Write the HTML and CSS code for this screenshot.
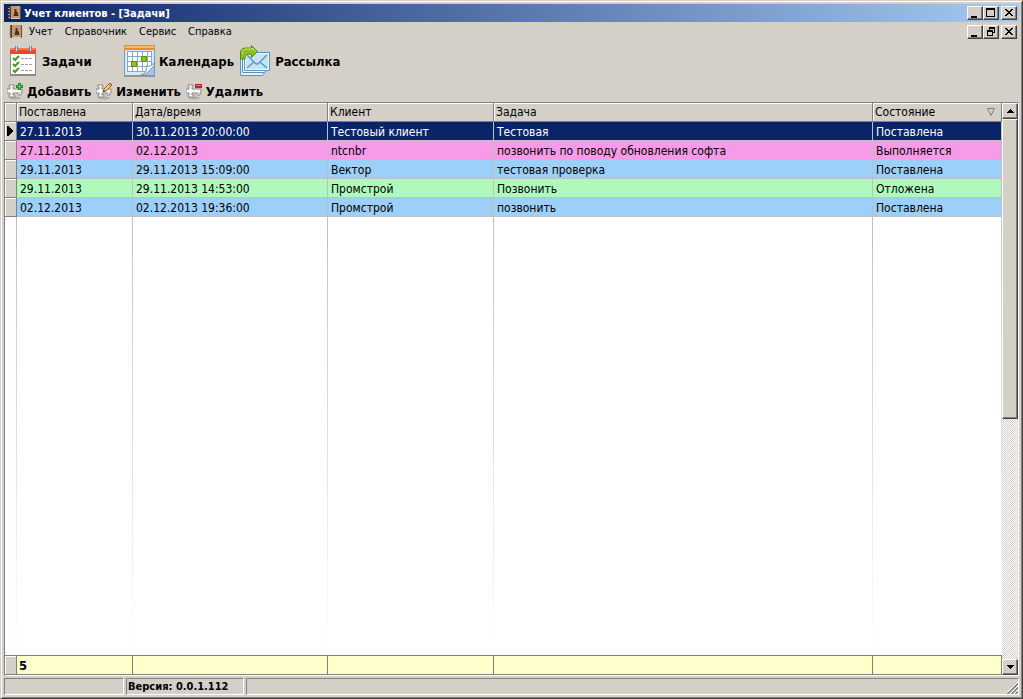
FILE: index.html
```html
<!DOCTYPE html>
<html lang="ru">
<head>
  <meta charset="UTF-8">
  <meta name="viewport" content="width=device-width, initial-scale=1.0">
  <title>Учет клиентов - [Задачи]</title>
  <link rel="stylesheet" href="styles.css">
</head>
<body>

  <svg class="sprite" width="0" height="0" aria-hidden="true">
    <symbol id="book" viewBox="0 0 14 14">
      <rect x="1" y="0" width="12" height="13" rx="1" fill="#6b4a30"/>
      <rect x="3" y="0" width="9" height="12" fill="#c29a72"/>
      <rect x="2" y="0" width="1" height="13" fill="#4a3628"/>
      <path d="M0 2.500h2M0 5.500h2M0 8.500h2M0 11.500h2" stroke="#a49a8c"/>
      <path d="M6.500 3h2v3h1l1 4h-5l1-4h0z" fill="#4b2f1d"/>
      <rect x="3" y="12" width="9" height="1" fill="#dccdb8"/>
    </symbol>
    <symbol id="joint" viewBox="0 0 17 17">
      <ellipse cx="8" cy="15" rx="6" ry="1.500" fill="#8f8c86" opacity=".5"/>
      <path d="M2 2h5v2H6v2h9v4h-1v2h-3v-2H6v2h2v2H2v-2h1v-2H0V6h3V4H2z" fill="#f8f8f6" stroke="#8c8984"/>
      <path d="M1 9.500h2M6 9.500h7" stroke="#c4c2bd"/>
    </symbol>
  </svg>

  <div class="window">
    <header class="titlebar">
      <svg class="app-icon" width="14" height="14"><use href="#book"/></svg>
      <h1>Учет клиентов - [Задачи]</h1>
      <div class="controls">
        <button class="ctl" aria-label="Свернуть"><svg width="12" height="10"><path d="M2 8h6v2H2z"/></svg></button>
        <button class="ctl" aria-label="Развернуть"><svg width="12" height="10"><path d="M1 0h9v9H1zM2 2v6h7V2z" fill-rule="evenodd"/></svg></button>
        <button class="ctl ctl-close" aria-label="Закрыть"><svg width="12" height="10"><path d="M2 1h2v1h1v1h2V2h1V1h2v1H9v1H8v1H7v1h1v1h1v1h1v1H8V7H7V6H5v1H4v1H2V7h1V6h1V5h1V4H4V3H3V2H2z"/></svg></button>
      </div>
    </header>

    <div class="menubar">
      <svg class="app-icon" width="14" height="14"><use href="#book"/></svg>
      <nav class="menu">
        <a href="#">Учет</a>
        <a href="#">Справочник</a>
        <a href="#">Сервис</a>
        <a href="#">Справка</a>
      </nav>
      <div class="controls">
        <button class="ctl" aria-label="Свернуть окно"><svg width="12" height="10"><path d="M2 8h6v2H2z"/></svg></button>
        <button class="ctl" aria-label="Восстановить окно"><svg width="12" height="10"><path d="M4 0h6v6H8V5h1V2H5v1H4zM2 3h6v6H2zM3 5v3h4V5z" fill-rule="evenodd"/></svg></button>
        <button class="ctl ctl-close" aria-label="Закрыть окно"><svg width="12" height="10"><path d="M2 1h2v1h1v1h2V2h1V1h2v1H9v1H8v1H7v1h1v1h1v1h1v1H8V7H7V6H5v1H4v1H2V7h1V6h1V5h1V4H4V3H3V2H2z"/></svg></button>
      </div>
    </div>

    <div class="toolbar toolbar-main">
      <button class="tool tool-tasks">
        <svg width="32" height="32">
          <rect x="1" y="3" width="26" height="28" fill="#8d8a86"/>
          <rect x="2" y="4" width="24" height="25" fill="#fff"/>
          <rect x="1" y="3" width="26" height="6" fill="#e8492a"/>
          <rect x="1" y="3" width="26" height="2" fill="#f47a50"/>
          <path d="M7.500 1v6M21.500 1v6" stroke="#6f8796" stroke-width="3"/>
          <path d="M7.500 1v5M21.500 1v5" stroke="#c6dbe5"/>
          <path d="M4 13l2 2 4-4M4 19l2 2 4-4M4 25l2 2 4-4" fill="none" stroke="#4f971c" stroke-width="2"/>
          <path d="M12 13.500h11M12 19.500h11M12 25.500h11" stroke="#a5a5a5" stroke-dasharray="3 1"/>
        </svg>
        <span>Задачи</span>
      </button>
      <button class="tool">
        <svg width="31" height="32">
          <rect x="0" y="0" width="31" height="31" fill="#709dbe"/>
          <rect x="1" y="1" width="29" height="29" fill="#d3ebfa"/>
          <rect x="0" y="0" width="31" height="5" fill="#ee8b2a"/>
          <rect x="1" y="1" width="29" height="2" fill="#ffb869"/>
          <rect x="3" y="6" width="25" height="20" fill="#fff"/>
          <path d="M3.500 6v21M8.500 6v21M13.500 6v21M18.500 6v21M23.500 6v21M27.500 6v21M3 6.500h25M3 11.500h25M3 16.500h25M3 21.500h25M3 26.500h25" stroke="#8aa8bf"/>
          <path d="M7 16h6v6H7zM17 11h6v6h-6z" fill="#5f9516"/>
          <path d="M8 17h4v4H8zM18 12h4v4h-4z" fill="#8cc21f"/>
          <path d="M30 17v13H16c5-1 6-4 6-8 4 1 7-1 8-5z" fill="#a2c8e6"/>
          <path d="M17 30c5-1 6-5 5-9 4 1 6-1 8-3v3l-9 9z" fill="#f2f9ff" stroke="#6b97b9"/>
          <path d="M0 31.500h31" stroke="#9a9893"/>
        </svg>
        <span>Календарь</span>
      </button>
      <button class="tool">
        <svg width="31" height="32">
          <path d="M.5 13.500h24v14l-2 3h-22z" fill="#e3f3fd" stroke="#5b91bd"/>
          <path d="M2.500 10.500h24v14l-2 3h-22z" fill="#f3faff" stroke="#5b91bd"/>
          <path d="M4.500 7.500h25v18h-25z" fill="#c2e5f9" stroke="#5b91bd"/>
          <path d="M5.500 8.500h23v16h-23z" fill="none" stroke="#eef9ff"/>
          <path d="M7 10l8 8q2 2 4 0l8-8M7 23l7-6M27 23l-7-6" fill="none" stroke="#6598bd" stroke-width="1.500"/>
          <path d="M.5 14V8q0-5 6-5h5V.5l6 6-6 6V9H8q-3 0-3 5z" fill="#8cc11e" stroke="#52851b"/>
          <path d="M2 9q0-5 5-5h5.500V3l3 3" fill="none" stroke="#c8e66f"/>
        </svg>
        <span>Рассылка</span>
      </button>
    </div>

    <div class="toolbar toolbar-edit">
      <button class="tool">
        <svg width="17" height="17"><use href="#joint"/><path d="M12.500 0v7M9 3.500h7" stroke="#24852b" stroke-width="3"/><path d="M12.500 1v5M10 3.500h5" stroke="#50d457"/></svg>
        <span>Добавить</span>
      </button>
      <button class="tool">
        <svg width="17" height="17"><use href="#joint"/><path d="M7 9l1-3 6-6 2 2-6 6z" fill="#f0cf62" stroke="#8a6b33"/><path d="M13 1l1-1 2 2-1 1z" fill="#d05a4c"/><path d="M7 9l1-2 1 1z" fill="#222"/></svg>
        <span>Изменить</span>
      </button>
      <button class="tool">
        <svg width="17" height="17"><use href="#joint"/><path d="M9 1h7v4H9z" fill="#ad2931"/><path d="M10 2h5v1h-5z" fill="#f27377"/></svg>
        <span>Удалить</span>
      </button>
    </div>

    <main class="grid">
      <table class="tasks">
        <colgroup>
          <col class="col-mark">
          <col class="col-set">
          <col class="col-date">
          <col class="col-client">
          <col>
          <col class="col-state">
        </colgroup>
        <thead>
          <tr>
            <th></th>
            <th>Поставлена</th>
            <th>Дата/время</th>
            <th>Клиент</th>
            <th>Задача</th>
            <th><div class="sorted">Состояние <svg width="8" height="8"><path d="M.5.500h7L4 7.500z" fill="none" stroke="#808080"/></svg></div></th>
          </tr>
        </thead>
        <tbody>
          <tr class="row selected">
            <td class="mark"><svg width="6" height="10"><path d="M0 0h1l5 5-5 5H0z"/></svg></td>
            <td>27.11.2013</td>
            <td>30.11.2013 20:00:00</td>
            <td>Тестовый клиент</td>
            <td>Тестовая</td>
            <td>Поставлена</td>
          </tr>
          <tr class="row running">
            <td class="mark"></td>
            <td>27.11.2013</td>
            <td>02.12.2013</td>
            <td>ntcnbr</td>
            <td>позвонить по поводу обновления софта</td>
            <td>Выполняется</td>
          </tr>
          <tr class="row placed">
            <td class="mark"></td>
            <td>29.11.2013</td>
            <td>29.11.2013 15:09:00</td>
            <td>Вектор</td>
            <td>тестовая проверка</td>
            <td>Поставлена</td>
          </tr>
          <tr class="row delayed">
            <td class="mark"></td>
            <td>29.11.2013</td>
            <td>29.11.2013 14:53:00</td>
            <td>Промстрой</td>
            <td>Позвонить</td>
            <td>Отложена</td>
          </tr>
          <tr class="row placed">
            <td class="mark"></td>
            <td>02.12.2013</td>
            <td>02.12.2013 19:36:00</td>
            <td>Промстрой</td>
            <td>позвонить</td>
            <td>Поставлена</td>
          </tr>
          <tr class="filler">
            <td></td><td></td><td></td><td></td><td></td><td></td>
          </tr>
        </tbody>
        <tfoot>
          <tr>
            <td class="mark"></td>
            <td>5</td>
            <td></td><td></td><td></td><td></td>
          </tr>
        </tfoot>
      </table>

      <div class="scrollbar">
        <button class="scroll-btn" aria-label="Вверх"><svg width="7" height="4"><path d="M3 0h1v1h1v1h1v1h1v1H0V3h1V2h1V1h1z"/></svg></button>
        <div class="track"><div class="thumb"></div></div>
        <button class="scroll-btn" aria-label="Вниз"><svg width="7" height="4"><path d="M0 0h7v1H6v1H5v1H4v1H3V3H2V2H1V1H0z"/></svg></button>
      </div>
    </main>

    <footer class="statusbar">
      <div class="panel panel-first"></div>
      <div class="panel panel-version">Версия: 0.0.1.112</div>
      <div class="panel panel-last">
        <svg width="12" height="12"><path d="M0 12L12 0M4 12l8-8M8 12l4-4" stroke="#fff"/><path d="M1 12L12 1M2 12L12 2M5 12l7-7M6 12l6-6M9 12l3-3M10 12l2-2" stroke="#808080"/></svg>
      </div>
    </footer>
  </div>

</body>
</html>
```
FILE: styles.css
```css
* {
  box-sizing: border-box;
}

body {
  margin: 0;
  background: #d4d0c8;
  color: #000;
  font-family: "DejaVu Sans Condensed", Tahoma, "DejaVu Sans", sans-serif;
  font-size: 12px;
}

svg {
  display: block;
  flex: none;
}

.sprite {
  position: absolute;
}

button {
  font: inherit;
  color: inherit;
  padding: 0;
}

.window {
  display: flex;
  flex-direction: column;
  height: 100vh;
  padding: 2px;
  border: 1px solid;
  border-color: #d4d0c8 #404040 #404040 #d4d0c8;
  box-shadow: inset 1px 1px #fff, inset -1px -1px #808080;
}

/* title and menu */
.titlebar,
.menubar {
  display: flex;
  align-items: center;
  margin: 0 1px;
  padding: 0 2px 0 4px;
}

.titlebar {
  height: 18px;
  margin-top: 1px;
  background: linear-gradient(to right, #0a246a, #a6caf0);
  color: #fff;
}

.titlebar h1 {
  margin: 0 0 0 2px;
  font-size: 11px;
  font-weight: bold;
}

.menubar {
  height: 20px;
  padding-left: 5px;
  font-size: 11px;
}

.menu {
  display: flex;
  gap: 12px;
  margin-left: 6px;
  padding-bottom: 2px;
}

.menu a {
  color: #000;
  text-decoration: none;
}

.controls {
  display: flex;
  margin-left: auto;
}

.ctl,
.scroll-btn,
.thumb {
  background: #d4d0c8;
  border: 1px solid;
  border-color: #fff #404040 #404040 #fff;
  box-shadow: inset -1px -1px #808080;
}

.ctl {
  width: 16px;
  height: 14px;
  padding: 1px;
}

.ctl svg,
.scroll-btn svg,
.mark svg {
  shape-rendering: crispEdges;
}

.ctl-close {
  margin-left: 2px;
}

/* toolbars */
.toolbar {
  display: flex;
}

.tool {
  display: flex;
  align-items: center;
  gap: 4px;
  border: none;
  background: none;
  font-size: 13px;
  font-weight: bold;
}

.toolbar-main {
  gap: 6px;
  padding: 3px 6px 4px;
}

.tool-tasks {
  min-width: 109px;
  gap: 1px;
}

.toolbar-edit {
  gap: 5px;
  padding: 0 4px;
  height: 21px;
}

.toolbar-edit .tool {
  gap: 3px;
}

/* grid */
.grid {
  display: flex;
  flex: 1;
  min-height: 0;
  margin: 0 1px;
  border: 1px solid;
  border-color: #808080 #fff #fff #808080;
  background: #fff;
}

.tasks {
  flex: 1;
  min-width: 0;
  height: 100%;
  table-layout: fixed;
  border-collapse: separate;
  border-spacing: 0;
}

.col-mark { width: 12px; }
.col-set { width: 116px; }
.col-date { width: 195px; }
.col-client { width: 166px; }
.col-state { width: 129px; }

.tasks th,
.tasks td {
  overflow: hidden;
  white-space: nowrap;
  text-align: left;
}

.tasks th {
  height: 19px;
  padding: 0 2px;
  background: #d4d0c8;
  border-right: 1px solid #808080;
  border-bottom: 1px solid #808080;
  box-shadow: inset 1px 1px #fff;
  font-weight: normal;
}

.sorted {
  display: flex;
  justify-content: space-between;
  align-items: center;
  padding-right: 4px;
}

.row td {
  height: 19px;
  padding: 2px 3px 0;
  border-right: 1px solid #c0c0c0;
  border-bottom: 1px solid #c0c0c0;
}

.row .mark {
  padding: 0 2px;
  background: #d4d0c8;
  border-color: #808080;
  box-shadow: inset 1px 1px #fff;
}

.selected {
  background: #0a246a;
  color: #fff;
}

.running { background: #f89ae8; }
.placed { background: #9dd0f9; }
.delayed { background: #b0f9bd; }

/* column lines fade out under the last record */
.filler td {
  padding: 0;
  background: linear-gradient(#c0c0c0, #fff) right / 1px 100% no-repeat;
}

.tasks tfoot td {
  height: 20px;
  padding: 0 2px;
  background: #ffffcc;
  border: 1px solid #808080;
  border-left: none;
  font-size: 13px;
  font-weight: bold;
}

.tasks tfoot .mark {
  background: #d4d0c8;
  box-shadow: inset 1px 1px #fff;
}

/* scrollbar */
.scrollbar {
  display: flex;
  flex-direction: column;
  width: 16px;
  background: repeating-conic-gradient(#d4d0c8 0 25%, #fff 0 50%) 0 0 / 2px 2px;
}

.scroll-btn {
  display: flex;
  align-items: center;
  justify-content: center;
  height: 16px;
}

.track {
  flex: 1;
}

.thumb {
  height: 55.5%;
}

/* status bar */
.statusbar {
  display: flex;
  gap: 2px;
  margin: 2px 1px 1px;
}

.panel {
  display: flex;
  align-items: center;
  height: 17px;
  border: 1px solid;
  border-color: #808080 #fff #fff #808080;
  font-size: 11px;
  font-weight: bold;
}

.panel-first { width: 120px; }

.panel-version {
  width: 118px;
  padding-left: 1px;
}

.panel-last {
  flex: 1;
  align-items: flex-end;
  justify-content: flex-end;
}
```
